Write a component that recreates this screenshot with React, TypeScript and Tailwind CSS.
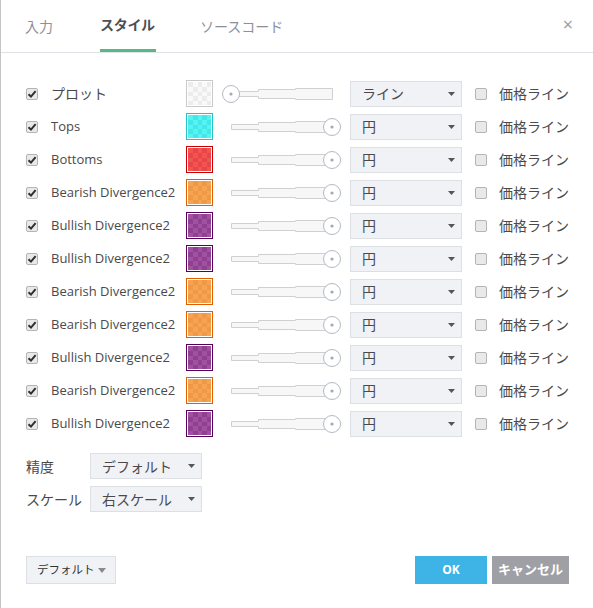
import React from "react";

type Swatch = { border: string; a: string; b: string };

const SW: Record<string, Swatch> = {
  plot: { border: "#c9c9c9", a: "#ececec", b: "#f9f9f9" },
  cyan: { border: "#22c4c8", a: "#55f3f3", b: "#42e8e8" },
  red: { border: "#c80000", a: "#f25454", b: "#e84646" },
  orange: { border: "#e06000", a: "#f7a452", b: "#ef9846" },
  purple: { border: "#5a005a", a: "#a052a0", b: "#8f4090" },
};

const rows: { label: string; cjk?: boolean; sw: string; left?: boolean; style: string }[] = [
  { label: "プロット", cjk: true, sw: "plot", left: true, style: "ライン" },
  { label: "Tops", sw: "cyan", style: "円" },
  { label: "Bottoms", sw: "red", style: "円" },
  { label: "Bearish Divergence2", sw: "orange", style: "円" },
  { label: "Bullish Divergence2", sw: "purple", style: "円" },
  { label: "Bullish Divergence2", sw: "purple", style: "円" },
  { label: "Bearish Divergence2", sw: "orange", style: "円" },
  { label: "Bearish Divergence2", sw: "orange", style: "円" },
  { label: "Bullish Divergence2", sw: "purple", style: "円" },
  { label: "Bearish Divergence2", sw: "orange", style: "円" },
  { label: "Bullish Divergence2", sw: "purple", style: "円" },
];

function CheckBox({ checked }: { checked: boolean }) {
  return (
    <div className="w-[12px] h-[12px] rounded-[2px] border border-[#b4b4b4] bg-[#e9e9e9] flex items-center justify-center shrink-0">
      {checked && (
        <svg width="10" height="10" viewBox="0 0 10 10">
          <path d="M1.5 5.2 L4 7.6 L8.6 2.2" stroke="#2f2f2f" strokeWidth="2" fill="none" />
        </svg>
      )}
    </div>
  );
}

function ColorSwatch({ k }: { k: string }) {
  const s = SW[k];
  const cells = [];
  const pos = [0, 5, 10, 14, 19, 23];
  for (let r = 0; r < 5; r++)
    for (let c = 0; c < 5; c++)
      cells.push(
        <rect
          key={r + "-" + c}
          x={pos[c]}
          y={pos[r]}
          width={pos[c + 1] - pos[c]}
          height={pos[r + 1] - pos[r]}
          fill={(r + c) % 2 === 0 ? s.a : s.b}
        />
      );
  return (
    <div className="w-[27px] h-[27px] p-[1px] bg-white border shrink-0" style={{ borderColor: s.border }}>
      <svg width="23" height="23" viewBox="0 0 23 23" className="block" shapeRendering="crispEdges">
        {cells}
      </svg>
    </div>
  );
}

function Slider({ left }: { left?: boolean }) {
  const cx = left ? 9 : 110;
  return (
    <svg width="119" height="20" viewBox="0 0 119 20" className="block shrink-0">
      <path
        d="M9.5 7.5 H36.5 V5.5 H73.5 V4.5 H110.5 V15.5 H73.5 V14.5 H36.5 V12.5 H9.5 Z"
        fill="#f7f7f7"
        stroke="#d0d0d0"
        strokeWidth="1"
      />
      <circle cx={cx} cy="10" r="8.5" fill="#fff" stroke="#b3b9c5" strokeWidth="1" />
      <circle cx={cx} cy="10" r="1.6" fill="#a3a8b2" />
    </svg>
  );
}

function Caret({ color = "#555", w = 7, h = 4 }: { color?: string; w?: number; h?: number }) {
  return (
    <svg width={w} height={h} viewBox={`0 0 ${w} ${h}`} className="block shrink-0">
      <path d={`M0 0 H${w} L${w / 2} ${h} Z`} fill={color} />
    </svg>
  );
}

function Select({ value, w }: { value: string; w: string }) {
  return (
    <div
      className={
        "h-[26px] border border-[#dcdfe4] bg-[#f1f2f6] flex items-center justify-between pl-[11px] pr-[6px] shrink-0 text-[14px] text-[#4a4a4a] whitespace-nowrap " +
        w
      }
    >
      <span>{value}</span>
      <Caret />
    </div>
  );
}

export default function App() {
  return (
    <div
      className="w-[593px] h-[608px] bg-white border-l border-[#c4c4c4] flex flex-col text-[#4a4a4a]"
      style={{ fontFamily: '"Open Sans", "Noto Sans CJK JP", sans-serif' }}
    >
      {/* header */}
      <div className="h-[53px] border-b border-[#dfe2e6] flex items-stretch pl-[24px] pr-[20px] shrink-0">
        <div className="flex items-center text-[14px] text-[#8d9099] w-[75px]">入力</div>
        <div className="flex flex-col justify-end w-[100px]">
          <div className="flex-1 flex items-center text-[14px] font-bold text-[#4b4f59] tracking-[-0.3px]">スタイル</div>
          <div className="h-[3px] w-[56px] bg-[#53b985]" />
        </div>
        <div className="flex items-center text-[14px] text-[#8d9099]">ソースコード</div>
        <div className="flex-1" />
        <div className="flex items-center text-[#9a9ca3] text-[18px] leading-none pb-[4px]">×</div>
      </div>

      {/* rows */}
      <div className="flex flex-col pt-[24px]">
        {rows.map((r, i) => (
          <div key={i} className="h-[33px] flex items-center pl-[25px]">
            <CheckBox checked />
            <div className={"w-[148px] pl-[13px] whitespace-nowrap " + (r.cjk ? "text-[14px]" : "text-[13px]")}>{r.label}</div>
            <ColorSwatch k={r.sw} />
            <div className="w-[9px]" />
            <Slider left={r.left} />
            <div className="w-[9px]" />
            <Select value={r.style} w="w-[112px]" />
            <div className="w-[13px]" />
            <CheckBox checked={false} />
            <div className="pl-[12px] text-[14px] whitespace-nowrap">価格ライン</div>
          </div>
        ))}
      </div>

      {/* precision / scale */}
      <div className="flex flex-col gap-[7px] mt-[13px] pl-[25px]">
        <div className="flex items-center">
          <div className="w-[64px] text-[14px]">精度</div>
          <Select value="デフォルト" w="w-[112px]" />
        </div>
        <div className="flex items-center">
          <div className="w-[64px] text-[14px] whitespace-nowrap">スケール</div>
          <Select value="右スケール" w="w-[112px]" />
        </div>
      </div>

      {/* footer */}
      <div className="flex items-center justify-between pl-[25px] pr-[24px] mt-[44px]">
        <div className="h-[28px] w-[90px] border border-[#dcdfe4] bg-[#f1f2f6] flex items-center justify-between pl-[10px] pr-[9px] text-[11.5px] text-[#333] whitespace-nowrap">
          <span>デフォルト</span>
          <Caret color="#8a8a8a" w={8} h={5} />
        </div>
        <div className="flex gap-[5px]">
          <div className="h-[28px] w-[72px] bg-[#3db4e5] text-white text-[12px] font-bold flex items-center justify-center">
            OK
          </div>
          <div className="h-[28px] w-[77px] bg-[#9ea0a6] text-white text-[13px] font-bold flex items-center justify-center whitespace-nowrap">
            キャンセル
          </div>
        </div>
      </div>
    </div>
  );
}
